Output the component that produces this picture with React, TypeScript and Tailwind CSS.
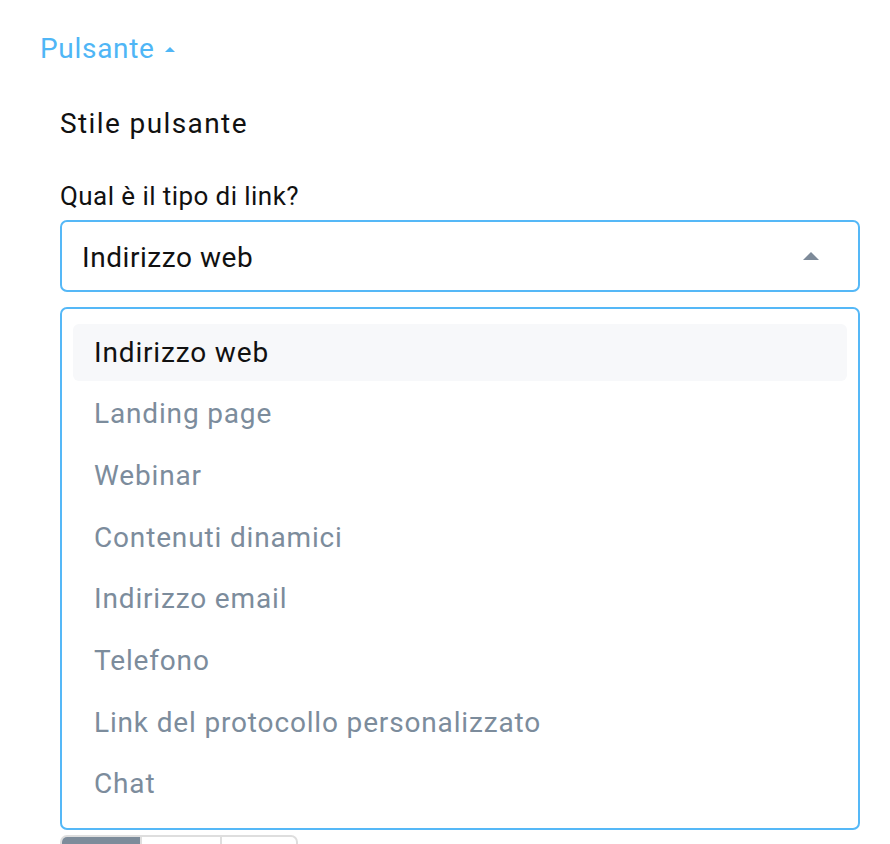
import React from "react";

const items = [
  "Indirizzo web",
  "Landing page",
  "Webinar",
  "Contenuti dinamici",
  "Indirizzo email",
  "Telefono",
  "Link del protocollo personalizzato",
  "Chat",
];

export default function App() {
  return (
    <div className="w-[890px] h-[844px] overflow-hidden bg-white" style={{ fontFamily: "Roboto, 'Liberation Sans', sans-serif" }}>
      <div className="pl-[40px] pt-[33px]">
        <div className="flex items-center h-[32px] text-[28px] leading-[32px] text-[#4fb6f6] tracking-[0.7px]">
          <span>Pulsante</span>
          <svg width="10" height="5" viewBox="0 0 10 5" className="ml-[10px] mt-[1px]">
            <path d="M0 5 L5 0 L10 5 Z" fill="#4fb6f6" />
          </svg>
        </div>
      </div>
      <div className="pl-[60px] pr-[30px]">
        <div className="mt-[43px] h-[32px] text-[28px] leading-[32px] text-[#111] tracking-[1.4px]">Stile pulsante</div>
        <div className="mt-[41px] h-[30px] text-[26px] leading-[30px] text-[#111] tracking-[0.43px]">Qual è il tipo di link?</div>
        <div className="mt-[9px] h-[72px] border-2 border-[#55b8f7] rounded-[7px] flex items-center justify-between pl-[20px] pr-[39px]">
          <span className="text-[28px] leading-[32px] text-[#111] tracking-[0.55px] mt-[4px]">Indirizzo web</span>
          <svg width="16" height="8" viewBox="0 0 16 8">
            <path d="M0 8 L8 0 L16 8 Z" fill="#7d8a99" />
          </svg>
        </div>
        <div className="mt-[15px] h-[523px] border-2 border-[#55b8f7] rounded-[7px] px-[11px] pt-[15px] flex flex-col gap-[4.7px]">
          {items.map((t, i) => (
            <div
              key={t}
              className={
                "h-[57px] shrink-0 rounded-[6px] flex items-center pl-[21px] text-[28px] leading-[32px] tracking-[0.84px] " +
                (i === 0 ? "bg-[#f7f8fa] text-[#111]" : "text-[#7c8c9c]")
              }
            >
              {t}
            </div>
          ))}
        </div>
        <div className="mt-[5px] flex w-[238px] h-[30px] border-2 border-[#dedede] rounded-[7px] overflow-hidden">
          <div className="w-[78px] bg-[#7d8c9b]" />
          <div className="w-[80px] border-l-2 border-[#dedede]" />
          <div className="flex-1 border-l-2 border-[#dedede]" />
        </div>
      </div>
    </div>
  );
}
